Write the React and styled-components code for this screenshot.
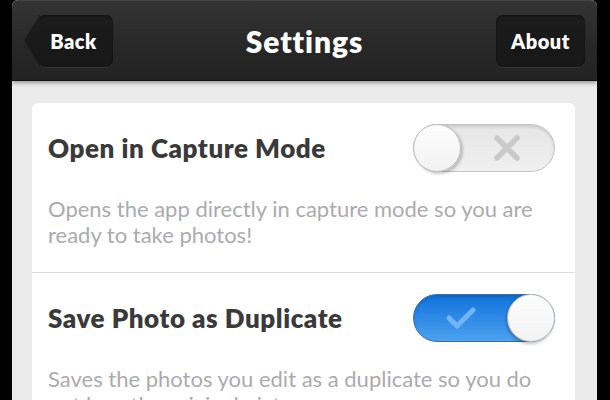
import React from 'react'
import styled, { createGlobalStyle } from 'styled-components'

const Global = createGlobalStyle`
  html, body {
    margin: 0;
    padding: 0;
    background: #000;
    height: 400px;
    overflow: hidden;
  }
  body {
    font-family: Lato, "Open Sans", sans-serif;
  }
`

const Stage = styled.div`
  display: flex;
  height: 400px;
  padding-left: 12px;
`

const Screen = styled.div`
  width: 585px;
  height: 400px;
  background: #ebebeb;
  border-radius: 6px 6px 0 0;
  overflow: hidden;
  display: flex;
  flex-direction: column;
`

const NavBar = styled.div`
  height: 79px;
  flex-shrink: 0;
  display: grid;
  grid-template-columns: 1fr auto 1fr;
  align-items: center;
  padding: 0 12px;
  background: linear-gradient(#343434, #272727 60%, #232323);
  border-top: 1px solid #454545;
  border-bottom: 1px solid #111;
  box-shadow: 0 2px 4px rgba(0, 0, 0, 0.35);
  position: relative;
  z-index: 1;
`

const Title = styled.h1`
  margin: 0;
  color: #fff;
  font-size: 30px;
  font-weight: 800;
  letter-spacing: 0.9px;
`

const NavButton = styled.button`
  position: relative;
  justify-self: ${p => (p.$back ? 'start' : 'end')};
  height: 52px;
  width: ${p => (p.$back ? '75px' : '89px')};
  padding: ${p => (p.$back ? '0 4px 0 0' : '0')};
  margin-left: ${p => (p.$back ? '14px' : '0')};
  border: none;
  border-radius: 7px;
  background: linear-gradient(#1c1c1c, #171717);
  box-shadow: 0 1px 0 rgba(255, 255, 255, 0.08), inset 0 1px 2px rgba(0, 0, 0, 0.5);
  color: #fff;
  font-family: inherit;
  font-size: 20px;
  font-weight: 800;
  letter-spacing: 0.5px;
  display: flex;
  align-items: center;
  justify-content: center;

  &::before {
    content: ${p => (p.$back ? "''" : 'none')};
    position: absolute;
    left: -14px;
    top: 0;
    width: 16px;
    height: 52px;
    background: linear-gradient(#1c1c1c, #171717);
    clip-path: polygon(0 50%, 100% 0, 100% 100%);
  }
`

const Card = styled.div`
  margin: 22px 22px 0 20px;
  background: #fff;
  border-radius: 6px;
`

const Row = styled.div`
  padding: 21px 20px 0 16px;
  height: 148px;
  border-top: ${p => (p.$first ? 'none' : '1px solid #dcdcdc')};
`

const RowHead = styled.div`
  display: flex;
  align-items: center;
  justify-content: space-between;
  height: 48px;
`

const Label = styled.div`
  color: #3a3a3a;
  font-size: 26px;
  font-weight: 800;
  letter-spacing: 0.55px;
`

const Desc = styled.p`
  margin: 24px 0 0;
  color: #ababae;
  font-size: 22px;
  line-height: 26px;
  font-weight: 400;
`

const Track = styled.div`
  position: relative;
  width: 142px;
  height: 48px;
  box-sizing: border-box;
  border-radius: 24px;
  border: 1px solid ${p => (p.$on ? '#3c6fa8' : '#c4c4c4')};
  background: ${p =>
    p.$on
      ? 'linear-gradient(#0f72db, #2f8ae6 50%, #4da2ef)'
      : 'linear-gradient(#e6e6e6, #f0f0f0)'};
  box-shadow: inset 0 2px 3px rgba(0, 0, 0, 0.12);
  display: flex;
  align-items: center;
  justify-content: center;
  padding: ${p => (p.$on ? '0 46px 0 0' : '0 0 0 46px')};
`

const Knob = styled.div`
  position: absolute;
  top: -1px;
  ${p => (p.$on ? 'right: -1px;' : 'left: -1px;')}
  width: 48px;
  height: 48px;
  box-sizing: border-box;
  border-radius: 50%;
  border: 1px solid #bdbdbd;
  background: linear-gradient(#fdfdfd, #f2f2f2);
  box-shadow: ${p => (p.$on ? '-1px 2px 3px rgba(0,0,0,0.25)' : '2px 2px 3px rgba(0,0,0,0.22)')};
`

const Toggle = ({ on }) => (
  <Track $on={on}>
    {on ? (
      <svg width="30" height="24" viewBox="0 0 30 24">
        <path d="M3 12 L11 20 L27 4" fill="none" stroke="#73b5f2" strokeWidth="5" strokeLinecap="round" strokeLinejoin="round" />
      </svg>
    ) : (
      <svg width="28" height="28" viewBox="0 0 28 28">
        <path d="M4 4 L24 24 M24 4 L4 24" fill="none" stroke="#c9c9c9" strokeWidth="5.5" strokeLinecap="round" />
      </svg>
    )}
    <Knob $on={on} />
  </Track>
)

const settings = [
  {
    label: 'Open in Capture Mode',
    desc: 'Opens the app directly in capture mode so you are ready to take photos!',
    on: false,
  },
  {
    label: 'Save Photo as Duplicate',
    desc: 'Saves the photos you edit as a duplicate so you do not lose the original picture.',
    on: true,
  },
]

export default function App() {
  return (
    <>
      <Global />
      <Stage>
        <Screen>
          <NavBar>
            <NavButton $back>Back</NavButton>
            <Title>Settings</Title>
            <NavButton>About</NavButton>
          </NavBar>
          <Card>
            {settings.map((s, i) => (
              <Row key={s.label} $first={i === 0}>
                <RowHead>
                  <Label>{s.label}</Label>
                  <Toggle on={s.on} />
                </RowHead>
                <Desc>{s.desc}</Desc>
              </Row>
            ))}
          </Card>
        </Screen>
      </Stage>
    </>
  )
}
